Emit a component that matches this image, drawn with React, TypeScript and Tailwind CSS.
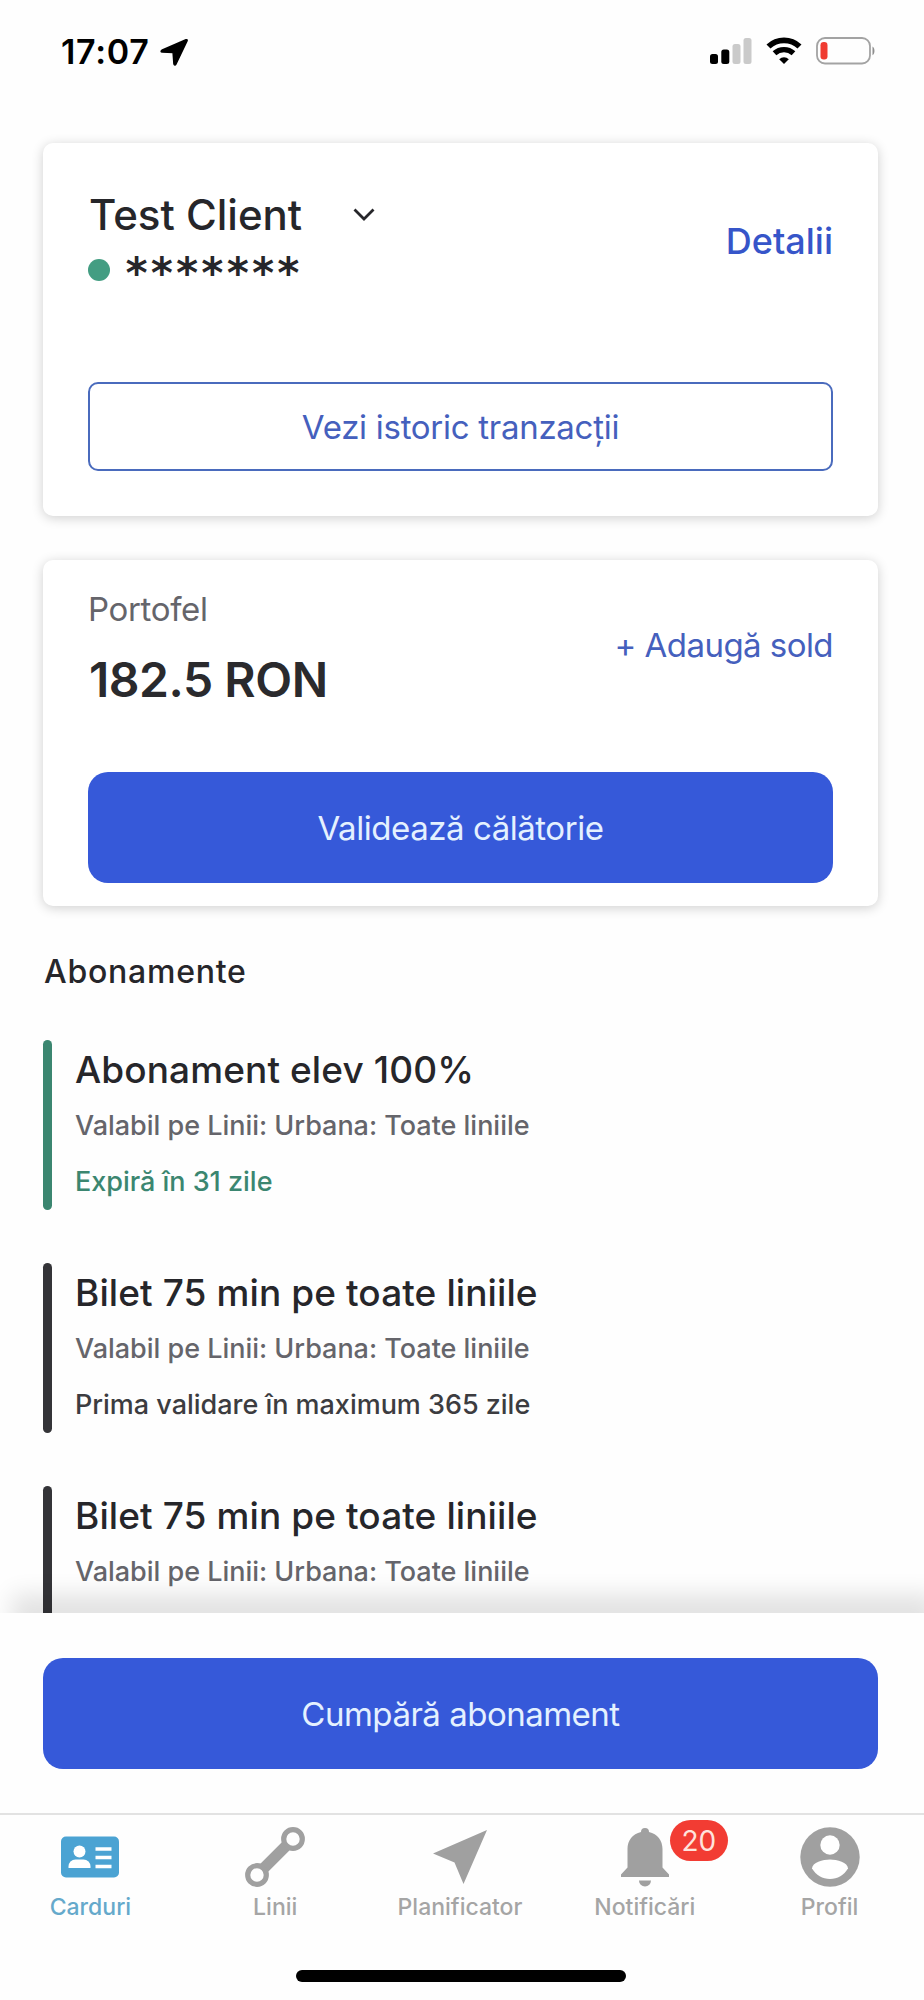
import React from "react";

type Pass = {
  title: string;
  lines: string;
  status?: string;
  bar_styles: string;
  status_styles?: string;
};

const passes: Pass[] = [
  {
    title: "Abonament elev 100%",
    lines: "Valabil pe Linii: Urbana: Toate liniile",
    status: "Expiră în 31 zile",
    bar_styles: "bg-[#3b8670]",
    status_styles: "text-[#3b8670]",
  },
  {
    title: "Bilet 75 min pe toate liniile",
    lines: "Valabil pe Linii: Urbana: Toate liniile",
    status: "Prima validare în maximum 365 zile",
    bar_styles: "bg-[#343438]",
    status_styles: "text-[#3c3c40]",
  },
  {
    title: "Bilet 75 min pe toate liniile",
    lines: "Valabil pe Linii: Urbana: Toate liniile",
    bar_styles: "bg-[#343438]",
  },
];

/**
 * Icons
 */
const CardIcon = () => (
  <svg width="58" height="60" viewBox="0 0 58 60" fill="none">
    <rect x="0" y="9.500" width="58" height="41" rx="5" fill="#4ba3d3" />
    <circle cx="18.500" cy="24.500" r="6" fill="#fff" />
    <path d="M7.500 41v-1.500a7 7 0 0 1 7-7h8a7 7 0 0 1 7 7V41Z" fill="#fff" />
    <path
      d="M34.500 22h16M34.500 30.500h16M34.500 39.500h16"
      stroke="#fff"
      strokeWidth="3.600"
    />
  </svg>
);

const LinesIcon = () => (
  <svg width="60" height="60" viewBox="0 0 60 60" fill="none" stroke="#a0a0a0">
    <path d="M19 41 41 19" strokeWidth="11" />
    <circle cx="12" cy="48" r="9.300" strokeWidth="5.200" />
    <circle cx="48" cy="12" r="9.300" strokeWidth="5.200" />
  </svg>
);

const PlannerIcon = () => (
  <svg width="60" height="60" viewBox="0 0 60 60" fill="#a0a0a0">
    <path d="M57 3 3 26.500 24.500 35.500 33.500 57Z" />
  </svg>
);

const BellIcon = () => (
  <svg width="60" height="60" viewBox="0 0 60 60" fill="#a0a0a0">
    <path d="M30 1a4 4 0 0 1 4 4c8.500 2 13.500 8.500 13.500 17v18.500l6.500 7V50H6v-2.500l6.500-7V22C12.500 13.500 17.500 7 26 5a4 4 0 0 1 4-4Z" />
    <path d="M24 53.500h12a6 6 0 0 1-12 0Z" />
  </svg>
);

const ProfileIcon = () => (
  <svg width="60" height="60" viewBox="0 0 60 60">
    <circle cx="30" cy="30" r="29.700" fill="#a0a0a0" />
    <circle cx="30" cy="18" r="9.700" fill="#fff" />
    <path
      d="M12 41.500C12 35.500 23 32.500 30 32.500s18 3 18 9C44 48 37.500 52 30 52s-14-4-18-10.500Z"
      fill="#fff"
    />
  </svg>
);

const tabs = [
  { label: "Carduri", icon: <CardIcon />, active: true },
  { label: "Linii", icon: <LinesIcon /> },
  { label: "Planificator", icon: <PlannerIcon /> },
  { label: "Notificări", icon: <BellIcon />, badge: 20 },
  { label: "Profil", icon: <ProfileIcon /> },
];

const StatusBar = () => (
  <header className="flex h-[103px] items-start justify-between pl-[61px] pr-[48px] pt-[32px]">
    <div className="flex items-center gap-[10px]">
      <span className="text-[34px] font-semibold leading-10 tracking-[0.7px] text-black">
        17:07
      </span>
      <svg width="28" height="28" viewBox="0 0 28 28">
        <path
          d="M26 1.800 1.800 12.300c-1 .5-.9 1.600.3 1.700l11 .6.8 11.200c.1 1.400 1.400 1.600 2 .4L27 2.900c.4-1-.1-1.500-1-1.100Z"
          fill="#000"
          stroke="#000"
          strokeWidth="1.500"
        />
      </svg>
    </div>

    <div className="flex items-center gap-[14px] pt-[5px]">
      <svg width="42" height="28" viewBox="0 0 42 28">
        <rect x="0" y="17" width="8" height="10" rx="2.500" fill="#000" />
        <rect x="11.300" y="12.500" width="8" height="14.500" rx="2.500" fill="#000" />
        <rect x="22.500" y="7" width="8" height="20" rx="2.500" fill="#cacaca" />
        <rect x="33.500" y="1" width="8" height="26" rx="2.500" fill="#cacaca" />
      </svg>
      <svg width="36" height="28" viewBox="0 0 36 28" fill="none" stroke="#000">
        <path d="M2.500 9.500a22.500 22.500 0 0 1 31 0" strokeWidth="5.800" />
        <path d="M8.500 16.300a14 14 0 0 1 19 0" strokeWidth="5.400" />
        <path
          d="M18 27l-4.800-4.800a7 7 0 0 1 9.600 0Z"
          fill="#000"
          stroke="none"
        />
      </svg>
      <svg width="60" height="28" viewBox="0 0 60 28">
        <rect
          x="1"
          y="1"
          width="53"
          height="25.500"
          rx="8"
          fill="none"
          stroke="#a3a3a3"
          strokeWidth="1.800"
        />
        <rect x="4.500" y="5" width="7" height="17.500" rx="3.200" fill="#f03b31" />
        <path d="M56.500 9.500c2.600 1.200 2.600 7.500 0 8.700Z" fill="#8e8e8e" />
      </svg>
    </div>
  </header>
);

const ClientCard = () => (
  <section className="rounded-[10px] bg-white px-[45px] pb-[45px] pt-[47px] shadow-[0_2px_12px_rgba(0,0,0,0.19)]">
    <div className="flex items-start justify-between">
      <div>
        <div className="flex items-center">
          <h1 className="w-[265px] pl-px text-[42px] font-medium leading-[50px] text-[#26262a]">
            Test Client
          </h1>
          <svg width="22" height="14" viewBox="0 0 22 14" fill="none">
            <path
              d="m1.500 1.500 9.500 9.500 9.500-9.500"
              stroke="#26262a"
              strokeWidth="2.800"
            />
          </svg>
        </div>
        <div className="mt-[10px] flex h-10 items-center gap-[14px]">
          <span className="size-[22px] rounded-full bg-[#439d82]" />
          <span className="pt-[8px] font-['DejaVu_Sans_Mono',monospace] text-[42px] font-bold leading-10 text-[#26262a]">
            *******
          </span>
        </div>
      </div>
      <button className="mt-[27px] text-[36px] font-medium leading-[48px] text-[#3655c9]">
        Detalii
      </button>
    </div>
    <button className="mt-[92px] h-[89px] w-full rounded-[10px] border-2 border-[#4a6bbd] text-[33px] leading-10 tracking-[-0.28px] text-[#4560bd]">
      Vezi istoric tranzacții
    </button>
  </section>
);

const WalletCard = () => (
  <section className="mt-[44px] rounded-[10px] bg-white px-[45px] pb-[23px] pt-[29px] shadow-[0_2px_12px_rgba(0,0,0,0.19)]">
    <div className="flex items-start justify-between">
      <div>
        <p className="text-[33px] leading-10 tracking-[-0.35px] text-[#65656b]">
          Portofel
        </p>
        <p className="mt-[21px] pl-px text-[48px] font-semibold leading-[60px] tracking-[-0.45px] text-[#2a2a2d]">
          182.5 RON
        </p>
      </div>
      <button className="mt-[36px] text-[33px] leading-10 tracking-[-0.55px] text-[#4560bd]">
        + Adaugă sold
      </button>
    </div>
    <button className="mt-[62px] h-[111px] w-full rounded-[20px] bg-[#3659d9] text-[33px] leading-10 tracking-[-0.45px] text-[#e4f1ff]">
      Validează călătorie
    </button>
  </section>
);

const PassItem = ({ pass }: { pass: Pass }) => (
  <li className="flex h-[170px] shrink-0 gap-[23px]">
    <span className={`w-[9px] rounded-full ${pass.bar_styles}`} />
    <div className="pt-[5px]">
      <h3 className="text-[37px] font-medium leading-[50px] tracking-[0.1px] text-[#26262a]">
        {pass.title}
      </h3>
      <p className="mt-[11px] text-[27px] font-[450] leading-10 tracking-[-0.02px] text-[#65656b]">
        {pass.lines}
      </p>
      {pass.status && (
        <p
          className={`mt-[16px] text-[27px] font-[450] leading-10 tracking-[-0.02px] ${pass.status_styles}`}
        >
          {pass.status}
        </p>
      )}
    </div>
  </li>
);

const TabBar = () => (
  <nav className="-ml-[2px] grid grid-cols-5 border-t-2 border-[#e2e2e2] pr-[2px] pt-[12px]">
    {tabs.map(({ label, icon, active, badge }) => (
      <button key={label} className="flex flex-col items-center">
        <span className="relative">
          {icon}
          {badge && (
            <span className="absolute -top-[7px] left-[55px] flex h-[41px] w-[58px] items-center justify-center rounded-full bg-[#f23c33] text-[28px] leading-none text-[#ffe3dc]">
              {badge}
            </span>
          )}
        </span>
        <span
          className={`mt-[4px] text-[23px] font-medium leading-[32px] ${
            active ? "text-[#65a9cb]" : "text-[#a5a5a5]"
          }`}
        >
          {label}
        </span>
      </button>
    ))}
  </nav>
);

const App = () => {
  return (
    <div className="flex h-[2000px] w-[924px] flex-col overflow-hidden bg-[#fefefe] font-['Inter',sans-serif]">
      {/* Scrolling content, cut off by the footer */}
      <main className="h-[1613px] shrink-0 overflow-hidden">
        <StatusBar />
        <div className="pl-[43px] pr-[46px] pt-[40px]">
          <ClientCard />
          <WalletCard />
          <h2 className="mt-[46px] pl-px text-[32px] font-medium leading-10 tracking-[0.75px] text-[#26262a]">
            Abonamente
          </h2>
          <ul className="mt-[48px] flex flex-col gap-[53px]">
            {passes.map((pass, index) => (
              <PassItem key={index} pass={pass} />
            ))}
          </ul>
        </div>
      </main>

      {/* Footer */}
      <footer className="relative flex grow flex-col bg-[#fefefe] shadow-[12px_-19px_22px_rgba(0,0,0,0.11)]">
        <div className="pb-[44px] pl-[43px] pr-[46px] pt-[45px]">
          <button className="h-[111px] w-full rounded-[20px] bg-[#3659d9] text-[33px] leading-10 tracking-[-0.5px] text-[#e4f1ff]">
            Cumpără abonament
          </button>
        </div>
        <TabBar />
        <span className="mb-[18px] ml-[296px] mt-auto h-[12px] w-[330px] rounded-full bg-black" />
      </footer>
    </div>
  );
};

export default App;
